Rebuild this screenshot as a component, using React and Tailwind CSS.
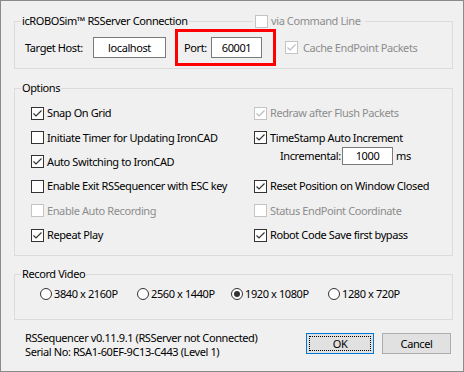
import clsx from 'clsx';

const Check = ({ checked, disabled }) => (
  <span
    className={clsx(
      'w-[13px] h-[13px] border bg-white flex items-center justify-center shrink-0',
      disabled ? 'border-[#c4c4c4]' : 'border-[#333333]'
    )}
  >
    {checked && (
      <svg width="11" height="11" viewBox="0 0 11 11">
        <path d="M1.5 5.5 L4 8 L9.5 2.5" fill="none" stroke={disabled ? '#bcbcbc' : '#333333'} strokeWidth="1.2" />
      </svg>
    )}
  </span>
);

const Opt = ({ label, checked, disabled }) => (
  <div className="flex items-center h-[24.4px] gap-[3px]">
    <Check checked={checked} disabled={disabled} />
    <span className={clsx(disabled && 'text-[#8d8d8d]')}>{label}</span>
  </div>
);

const Radio = ({ label, checked, w }) => (
  <div className={clsx('flex items-center gap-[2px]', w)}>
    <span className="w-[12px] h-[12px] rounded-full border border-[#333333] bg-white flex items-center justify-center shrink-0">
      {checked && <span className="w-[6px] h-[6px] rounded-full bg-[#333333]" />}
    </span>
    <span>{label}</span>
  </div>
);

const Field = ({ value, className }) => (
  <div className={clsx('bg-white border border-[#7a7a7a] flex items-center justify-center', className)}>{value}</div>
);

const Group = ({ title, className, children }) => (
  <fieldset className={clsx('relative border border-[#dcdcdc] w-[439px]', className)}>
    <legend className="ml-[6px] px-[1px] leading-[16px]">{title}</legend>
    {children}
  </fieldset>
);

export default function App() {
  return (
    <div className="w-[464px] h-[372px] bg-[#f0f0f0] border border-[#8a8a8a] pl-[13px] pr-[10px] pt-[12px] font-['Noto_Sans',sans-serif] text-[11px] tracking-[-0.4px] leading-[16px] text-black overflow-hidden">
      {/* Connection */}
      <Group title="icROBOSim™ RSServer Connection" className="h-[56px]">
        <div className="absolute left-[238px] top-[-16px] h-[16px] flex items-center gap-[3px] bg-[#f0f0f0] pl-[2px] pr-[5px]">
          <Check disabled />
          <span className="text-[#8d8d8d]">via Command Line</span>
        </div>
        <div className="flex items-center h-[37px] pl-[10px]">
          <span className="w-[68px]">Target Host:</span>
          <Field value="localhost" className="w-[73px] h-[21px]" />
          <div className="ml-[9px] w-[101px] h-[37px] border-[3px] border-[#ff0000] flex items-center pl-[6px]">
            <span className="w-[27px]">Port:</span>
            <Field value="60001" className="w-[51px] h-[21px]" />
          </div>
          <div className="ml-[9px] flex items-center gap-[5px]">
            <Check checked disabled />
            <span className="text-[#8d8d8d]">Cache EndPoint Packets</span>
          </div>
        </div>
      </Group>

      {/* Options */}
      <Group title="Options" className="h-[176px] mt-[11px]">
        <div className="grid grid-cols-[223px_1fr] pl-[16px] pt-[5px]">
          <Opt label="Snap On Grid" checked />
          <Opt label="Redraw after Flush Packets" checked disabled />
          <Opt label="Initiate Timer for Updating IronCAD" />
          <Opt label="TimeStamp Auto Increment" checked />
          <Opt label="Auto Switching to IronCAD" checked />
          <div className="flex items-center h-[24.4px] -mt-[6px] pl-[26px]">
            <span className="w-[62px]">Incremental:</span>
            <Field value="1000" className="w-[51px] h-[18px]" />
            <span className="ml-[3px]">ms</span>
          </div>
          <Opt label="Enable Exit RSSequencer with ESC key" />
          <Opt label="Reset Position on Window Closed" checked />
          <Opt label="Enable Auto Recording" disabled />
          <Opt label="Status EndPoint Coordinate" disabled />
          <Opt label="Repeat Play" checked />
          <Opt label="Robot Code Save first bypass" checked />
        </div>
      </Group>

      {/* Record Video */}
      <Group title="Record Video" className="h-[54px] mt-[10px]">
        <div className="flex items-center h-[24px] pl-[25px]">
          <Radio label="3840 x 2160P" w="w-[97px]" />
          <Radio label="2560 x 1440P" w="w-[94px]" />
          <Radio label="1920 x 1080P" w="w-[97px]" checked />
          <Radio label="1280 x 720P" />
        </div>
      </Group>

      {/* Footer */}
      <div className="mt-[11px] flex items-start pl-[11px] pr-[2px]">
        <div className="flex-1 leading-[14px]">
          <div>RSSequencer v0.11.9.1 (RSServer not Connected)</div>
          <div>Serial No: RSA1-60EF-9C13-C443 (Level 1)</div>
        </div>
        <div className="flex gap-[8px] mt-[2px]">
          <button className="w-[68px] h-[21px] bg-[#e1e1e1] border border-[#0078d7] p-[2px]">
            <div className="w-full h-full border border-dotted border-black flex items-center justify-center">OK</div>
          </button>
          <button className="w-[69px] h-[21px] bg-[#e1e1e1] border border-[#adadad] flex items-center justify-center">Cancel</button>
        </div>
      </div>
    </div>
  );
}
